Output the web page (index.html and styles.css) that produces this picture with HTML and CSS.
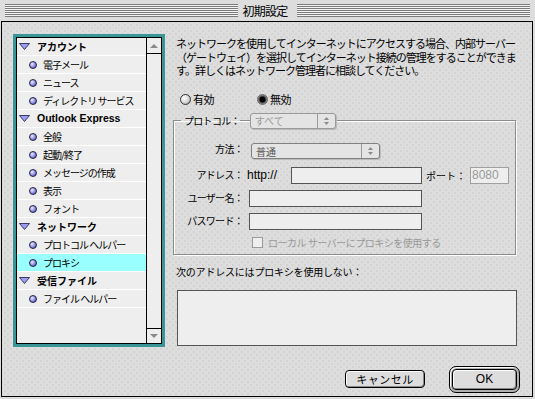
FILE: index.html
```html
<!DOCTYPE html>
<html lang="ja">
<head>
    <meta charset="UTF-8">
    <meta name="viewport" content="width=device-width, initial-scale=1.0">
    <title>初期設定</title>
<link rel="stylesheet" href="styles.css">
</head>
<body>
    <div class="window">
        <div class="titlebar">
            <div class="stripes"></div>
            <div class="title">初期設定</div>
            <div class="stripes"></div>
        </div>

        <div class="content">
            <!-- category list -->
            <div class="list-ring">
                <div class="list-box">
                    <ul class="tree">
                        <li class="group"><svg class="disclose" width="11" height="7" viewBox="0 0 11 7"><polygon points="0.5,0.5 10.5,0.5 5.5,6.5"/></svg>アカウント</li>
                        <li class="item"><span class="bullet"></span>電子メール</li>
                        <li class="item"><span class="bullet"></span>ニュース</li>
                        <li class="item"><span class="bullet"></span>ディレクトリ サービス</li>
                        <li class="group latin"><svg class="disclose" width="11" height="7" viewBox="0 0 11 7"><polygon points="0.5,0.5 10.5,0.5 5.5,6.5"/></svg>Outlook Express</li>
                        <li class="item"><span class="bullet"></span>全般</li>
                        <li class="item"><span class="bullet"></span>起動/終了</li>
                        <li class="item"><span class="bullet"></span>メッセージの作成</li>
                        <li class="item"><span class="bullet"></span>表示</li>
                        <li class="item"><span class="bullet"></span>フォント</li>
                        <li class="group"><svg class="disclose" width="11" height="7" viewBox="0 0 11 7"><polygon points="0.5,0.5 10.5,0.5 5.5,6.5"/></svg>ネットワーク</li>
                        <li class="item"><span class="bullet"></span>プロトコル ヘルパー</li>
                        <li class="item selected"><span class="bullet"></span>プロキシ</li>
                        <li class="group"><svg class="disclose" width="11" height="7" viewBox="0 0 11 7"><polygon points="0.5,0.5 10.5,0.5 5.5,6.5"/></svg>受信ファイル</li>
                        <li class="item"><span class="bullet"></span>ファイル ヘルパー</li>
                    </ul>
                    <div class="scrollbar">
                        <div class="arrow up"></div>
                        <div class="track"></div>
                        <div class="arrow down"></div>
                    </div>
                </div>
            </div>

            <!-- proxy settings -->
            <div class="panel">
                <p class="intro">ネットワークを使用してインターネットにアクセスする場合、内部サーバー<br>（ゲートウェイ）を選択してインターネット接続の管理をすることができま<br>す。詳しくはネットワーク管理者に相談してください。</p>

                <div class="radios">
                    <label class="radio-opt first"><span class="radio"></span>有効</label>
                    <label class="radio-opt"><span class="radio checked"></span>無効</label>
                </div>

                <fieldset class="group-box">
                    <legend>
                        <span class="legend-text">プロトコル：</span>
                        <span class="legend-line"></span>
                        <span class="popup dim w-all">すべて<span class="popup-arrows"><svg width="5" height="8" viewBox="0 0 5 8"><polygon points="0,3 2.5,0 5,3"/><polygon points="0,5 2.5,8 5,5"/></svg></span></span>
                    </legend>
                    <div class="form-grid">
                        <span class="field-label">方法：</span>
                        <div><span class="popup w-method">普通<span class="popup-arrows"><svg width="5" height="8" viewBox="0 0 5 8"><polygon points="0,3 2.5,0 5,3"/><polygon points="0,5 2.5,8 5,5"/></svg></span></span></div>

                        <span class="field-label">アドレス：</span>
                        <div class="addr-row">
                            <span class="scheme">http://</span>
                            <span class="input w-addr"></span>
                            <span class="port-label">ポート：</span>
                            <span class="input dim w-port">8080</span>
                        </div>

                        <span class="field-label">ユーザー名：</span>
                        <div><span class="input w-long"></span></div>

                        <span class="field-label">パスワード：</span>
                        <div><span class="input w-long"></span></div>

                        <span></span>
                        <div class="check-row"><span class="checkbox"></span>ローカル サーバーにプロキシを使用する</div>
                    </div>
                </fieldset>

                <p class="bypass-label">次のアドレスにはプロキシを使用しない：</p>
                <div class="bypass-box"></div>

                <div class="buttons">
                    <button class="btn btn-cancel">キャンセル</button>
                    <div class="btn-default"><button class="btn btn-ok">OK</button></div>
                </div>
            </div>
        </div>
    </div>
</body>
</html>
```

FILE: styles.css
```css
/* Platinum dialog */
:root {
    --face: #dddddd;
    --field: #eeeeee;
    --dot: #cdcdcd;
    --ring: #3a9597;
    --line: #8c8c8c;
    --dim: #999999;
    --select: #99ffff;
}

* {
    margin: 0;
    padding: 0;
    box-sizing: border-box;
}

body {
    width: 535px;
    height: 399px;
    overflow: hidden;
    background-color: var(--face);
    font-family: "Noto Sans CJK JP", sans-serif;
    color: #000;
}

.window {
    width: 535px;
    height: 399px;
    display: flex;
    flex-direction: column;
    background-color: var(--face);
}

/* Title bar */
.titlebar {
    height: 21px;
    display: flex;
    padding: 4px 5px 4px 5px;
}

.stripes {
    flex: 1;
    height: 13px;
    background: repeating-linear-gradient(to bottom, #7b7b7b 0 1px, #f4f4f4 1px 2px);
}

.title {
    padding: 0 9px 0 4px;
    font-size: 12px;
    line-height: 13px;
    letter-spacing: -0.7px;
}

.content {
    flex: 1;
    margin: 0 2px 2px 1px;
    border: 1px solid #000;
    display: flex;
    align-items: flex-start;
    background-color: var(--face);
    background-image:
        radial-gradient(circle, var(--dot) 0.6px, transparent 0.9px),
        radial-gradient(circle, var(--dot) 0.6px, transparent 0.9px);
    background-size: 6px 6px;
    background-position: 0 0, 3px 3px;
}

/* List */
.list-ring {
    margin: 12px 0 0 11px;
    width: 152px;
    height: 313px;
    border: 3px solid var(--ring);
}

.list-box {
    height: 100%;
    border: 1px solid #000;
    display: flex;
    background-color: var(--field);
}

.tree {
    list-style: none;
    width: 129px;
}

.tree li {
    height: 18px;
    display: flex;
    align-items: center;
    border-bottom: 1px solid #fff;
    font-size: 10px;
    line-height: 17px;
    white-space: nowrap;
}

.tree .item {
    padding-left: 12px;
    letter-spacing: -1px;
}

.tree .group {
    padding-left: 2px;
    font-weight: 700;
}

.tree .latin {
    font-family: "Liberation Sans", sans-serif;
    font-size: 10.5px;
}

.tree .selected {
    background-color: var(--select);
}

.disclose {
    margin-right: 7px;
    flex-shrink: 0;
}

.disclose polygon {
    fill: #9c9cf0;
    stroke: #2a2a55;
    stroke-width: 0.9;
}

.bullet {
    width: 8px;
    height: 8px;
    margin-right: 6px;
    border-radius: 50%;
    border: 1px solid #222244;
    background: radial-gradient(circle at 35% 35%, #eeeeff 0, #9a9aee 45%, #3c3c96 100%);
    flex-shrink: 0;
}

.scrollbar {
    width: 15px;
    border-left: 1px solid #000;
    display: flex;
    flex-direction: column;
}

.arrow {
    display: flex;
    align-items: center;
    justify-content: center;
}

.arrow::after {
    content: "";
    border-left: 4px solid transparent;
    border-right: 4px solid transparent;
}

.arrow.up {
    height: 16px;
    border-bottom: 1px solid #000;
}

.arrow.up::after {
    border-bottom: 4px solid #8a8a8a;
}

.arrow.down {
    height: 15px;
    border-top: 1px solid #000;
}

.arrow.down::after {
    border-top: 4px solid #8a8a8a;
}

.track {
    flex: 1;
}

/* Panel */
.panel {
    flex: 1;
    padding: 15px 0 0 11px;
}

.intro {
    font-size: 11px;
    line-height: 13.5px;
    letter-spacing: -1px;
    white-space: nowrap;
}

.radios {
    margin-top: 15px;
    padding-left: 4px;
    height: 13px;
    display: flex;
    align-items: center;
    font-size: 11px;
    letter-spacing: -0.5px;
}

.radio-opt {
    display: flex;
    align-items: center;
    gap: 2px;
}

.radio-opt.first {
    width: 77px;
}

.radio {
    width: 11px;
    height: 11px;
    border-radius: 50%;
    border: 1px solid #333;
    background: radial-gradient(circle at 35% 35%, #ffffff 0, #dadada 50%, #8a8a8a 100%);
}

.radio.checked {
    border-color: #666;
    background: radial-gradient(circle, #000 0 2.6px, #444 3.2px, #aaa 5px);
}

/* Group box */
.group-box {
    margin: 7px 0 0 -3px;
    width: 343px;
    border: 1px solid var(--line);
    box-shadow: 1px 1px 0 #fff, inset 1px 1px 0 #fff;
    padding: 8px 0 5px 0;
}

.group-box legend {
    margin-left: 7px;
    padding-left: 3px;
    display: flex;
    align-items: center;
}

.legend-text,
.field-label {
    font-size: 10px;
    letter-spacing: -0.7px;
    line-height: 16px;
}

.legend-line {
    width: 10px;
    height: 1px;
    background-color: var(--line);
}

.popup {
    height: 16px;
    display: inline-flex;
    align-items: center;
    justify-content: space-between;
    padding-left: 4px;
    border: 1px solid #808080;
    border-radius: 3px;
    background-color: #e4e4e4;
    box-shadow: 1px 1px 0 #bbbbbb;
    font-size: 10px;
    color: #555;
}

.popup.dim {
    color: var(--dim);
    border-color: #9a9a9a;
}

.popup-arrows {
    width: 18px;
    height: 100%;
    border-left: 1px solid #9a9a9a;
    display: flex;
    align-items: center;
    justify-content: center;
}

.popup-arrows polygon {
    fill: #8a8a8a;
}

.w-all {
    width: 86px;
}

.w-method {
    width: 129px;
    margin-left: 2px;
}

.form-grid {
    display: grid;
    grid-template-columns: 69px auto;
    column-gap: 6px;
    row-gap: 6px;
    align-items: center;
}

.field-label {
    text-align: right;
    white-space: nowrap;
}

.addr-row {
    display: flex;
    align-items: center;
    margin-left: -2px;
}

.scheme {
    font-family: "Liberation Sans", sans-serif;
    font-size: 12px;
    width: 44px;
}

.port-label {
    margin: 0 4px;
    font-size: 10px;
    letter-spacing: 0;
}

.input {
    display: block;
    height: 17px;
    border: 1px solid #555;
    background-color: var(--field);
    font-family: "Liberation Sans", sans-serif;
    font-size: 12px;
    line-height: 15px;
    padding-left: 1px;
}

.input.dim {
    border-color: #a0a0a0;
    color: var(--dim);
}

.w-addr {
    width: 131px;
}

.w-port {
    width: 39px;
}

.w-long {
    width: 173px;
}

.check-row {
    height: 13px;
    display: flex;
    align-items: center;
    padding-left: 3px;
    font-size: 10px;
    letter-spacing: -0.5px;
    color: var(--dim);
    white-space: nowrap;
}

.checkbox {
    width: 11px;
    height: 11px;
    margin-right: 5px;
    border: 1px solid #9a9a9a;
    background-color: var(--field);
}

.bypass-label {
    margin-top: 10px;
    font-size: 10px;
    line-height: 13px;
    letter-spacing: -0.2px;
}

.bypass-box {
    margin: 12px 0 0 1px;
    width: 340px;
    height: 56px;
    border: 1px solid #555;
    background-color: var(--field);
}

/* Buttons */
.buttons {
    margin-top: 20px;
    padding-right: 12px;
    display: flex;
    justify-content: flex-end;
    align-items: center;
    gap: 24px;
}

.btn {
    font-family: "Noto Sans CJK JP", sans-serif;
    border: 1px solid #000;
    border-radius: 4px;
    background-color: var(--face);
    box-shadow: inset 1px 1px 0 #fff, inset -1px -1px 0 #8a8a8a;
    color: #000;
}

.btn-cancel {
    width: 80px;
    height: 18px;
    font-size: 11px;
    letter-spacing: 0.5px;
    line-height: 16px;
}

.btn-default {
    padding: 2px;
    border: 1px solid #000;
    border-radius: 7px;
    background-color: #b0b0b0;
    box-shadow: inset 1px 1px 0 #fff;
}

.btn-ok {
    display: block;
    width: 65px;
    height: 21px;
    font-family: "Liberation Sans", sans-serif;
    font-size: 12px;
}
```
